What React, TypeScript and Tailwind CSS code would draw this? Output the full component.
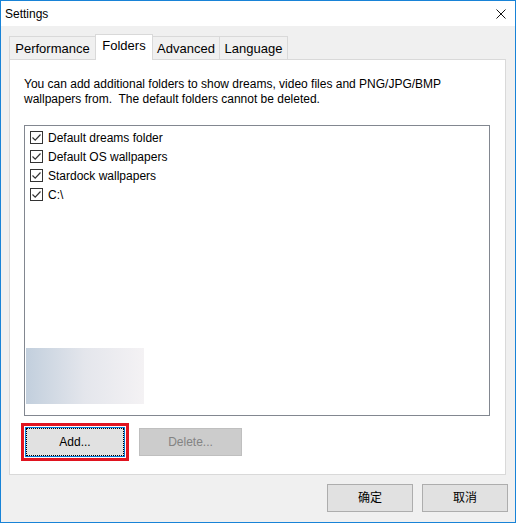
import React, { useState } from 'react';

const FONT = "font-['Liberation_Sans',Arial,'Noto_Sans_CJK_SC',sans-serif]";

interface Folder {
  name: string;
  enabled: boolean;
}

const TABS = ['Performance', 'Folders', 'Advanced', 'Language'];

// fixed tab widths, like the native tab strip
const TAB_WIDTHS: Record<string, string> = {
  Performance: 'w-[87px]',
  Folders: 'w-[58px]',
  Advanced: 'w-[68px]',
  Language: 'w-[69px]',
};

const CheckBox = ({ checked, onToggle }: { checked: boolean; onToggle: () => void }) => (
  <button
    type="button"
    onClick={onToggle}
    className="w-[13px] h-[13px] border border-[#333333] bg-white flex items-center justify-center shrink-0"
  >
    {checked && (
      <svg width="11" height="11" viewBox="0 0 11 11">
        <path d="M1.5 5.5 L4.2 8.2 L9.5 2.5" fill="none" stroke="#333333" strokeWidth="1.2" />
      </svg>
    )}
  </button>
);

const DialogButton = ({ children, className = '' }: { children: React.ReactNode; className?: string }) => (
  <button
    type="button"
    className={`w-[86px] h-[28px] bg-[#e1e1e1] border border-[#adadad] text-[12px] text-black ${className}`}
  >
    {children}
  </button>
);

export default function App() {
  const [activeTab, setActiveTab] = useState('Folders');
  const [folders, setFolders] = useState<Folder[]>([
    { name: 'Default dreams folder', enabled: true },
    { name: 'Default OS wallpapers', enabled: true },
    { name: 'Stardock wallpapers', enabled: true },
    { name: 'C:\\', enabled: true },
  ]);

  const toggle = (i: number) =>
    setFolders(folders.map((f, idx) => (idx === i ? { ...f, enabled: !f.enabled } : f)));

  return (
    <div className={`w-[516px] h-[523px] border border-[#1883d7] flex flex-col bg-[#f0f0f0] text-black ${FONT}`}>
      {/* title bar */}
      <div className="h-[25px] bg-white flex items-center justify-between pl-[4px] pr-[9px]">
        <span className="text-[12px] leading-none">Settings</span>
        <svg width="10" height="10" viewBox="0 0 10 10" className="mt-px">
          <path d="M0.5 0.5 L9.5 9.5 M9.5 0.5 L0.5 9.5" stroke="#111111" strokeWidth="1" />
        </svg>
      </div>

      <div className="flex-1 flex flex-col pt-[8px] pl-[8px] pr-[9px]">
        {/* tab strip */}
        <div className="h-[25px] flex items-end">
          {TABS.map((tab, i) => {
            const active = tab === activeTab;
            return (
              <button
                key={tab}
                type="button"
                onClick={() => setActiveTab(tab)}
                className={`${TAB_WIDTHS[tab]} ${i > 0 ? '-ml-px' : ''} border-x border-t border-[#d9d9d9] text-[13px] leading-none ${
                  active ? 'h-[26px] -mb-px bg-white relative z-10 pb-[4px]' : 'h-[23px] bg-[#f0f0f0] pt-px'
                }`}
              >
                {tab}
              </button>
            );
          })}
        </div>

        {/* tab page */}
        <div className="h-[416px] border border-[#d9d9d9] bg-white pl-[14px] pt-[17px]">
          <p className="text-[12px] leading-[15px] w-[460px]">
            You can add additional folders to show dreams, video files and PNG/JPG/BMP wallpapers from.&nbsp; The
            default folders cannot be deleted.
          </p>

          <div className="relative mt-[18px] w-[466px] h-[291px] border border-[#828790] bg-white pt-[2px] pl-[5px]">
            {folders.map((f, i) => (
              <div key={f.name} className="h-[19px] flex items-center gap-[5px] text-[12px]">
                <CheckBox checked={f.enabled} onToggle={() => toggle(i)} />
                <span className="leading-none">{f.name}</span>
              </div>
            ))}
            {/* faded preview strip at the bottom of the list */}
            <div className="absolute left-px top-[222px] w-[118px] h-[56px] bg-gradient-to-r from-[#c2cfdd] via-[#e4e6ec] to-[#f4f2f4]" />
          </div>

          <div className="mt-[7px] -ml-[3px] flex items-center gap-[10px]">
            <div className="border-[3px] border-[#e0131f] p-px bg-white">
              <button
                type="button"
                className="w-[100px] h-[30px] bg-[#e1e1e1] border border-[#0078d7] text-[12px] outline-1 outline-dotted outline-black -outline-offset-2"
              >
                Add...
              </button>
            </div>
            <button
              type="button"
              disabled
              className="w-[103px] h-[28px] bg-[#cccccc] border border-[#bfbfbf] text-[12px] text-[#838383]"
            >
              Delete...
            </button>
          </div>
        </div>

        {/* dialog buttons */}
        <div className="mt-[9px] flex justify-end gap-[9px] -mr-[2px]">
          <DialogButton>确定</DialogButton>
          <DialogButton>取消</DialogButton>
        </div>
      </div>
    </div>
  );
}
